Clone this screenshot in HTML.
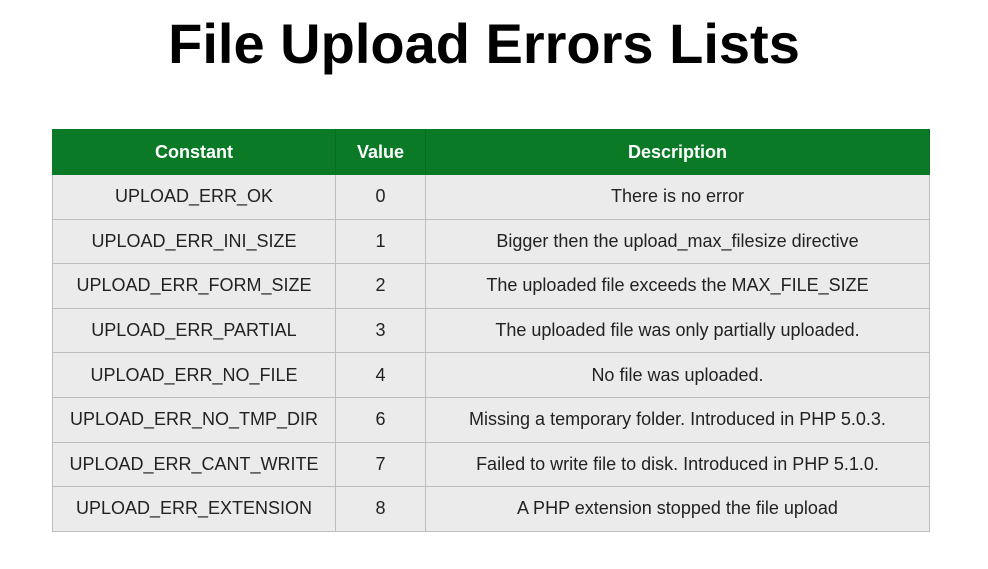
<!DOCTYPE html>
<html><head><style>
body{margin:0;width:988px;height:569px;background:#fff;font-family:"Liberation Sans",Arial,sans-serif;position:relative;overflow:hidden}
h1{position:absolute;top:12px;left:0;width:968px;margin:0;text-align:center;font-size:56px;font-weight:bold;color:#000;line-height:64px}
table{position:absolute;left:52px;top:129px;width:878px;border-collapse:collapse}
td,th{text-align:center;font-size:18px;color:#222;border:1px solid #bdbdbd;height:43.6px;padding:0}
th{background:#0b7a27;color:#fff;font-weight:bold;height:44px;border-color:#0b7a27;border-right:1px solid #0a6b22}
td{background:#ebebeb}
</style></head><body>
<h1>File Upload Errors Lists</h1>
<table>
<tr><th style="width:282px">Constant</th><th style="width:89px">Value</th><th>Description</th></tr>
<tr><td>UPLOAD_ERR_OK</td><td>0</td><td>There is no error</td></tr>
<tr><td>UPLOAD_ERR_INI_SIZE</td><td>1</td><td>Bigger then the upload_max_filesize directive</td></tr>
<tr><td>UPLOAD_ERR_FORM_SIZE</td><td>2</td><td>The uploaded file exceeds the MAX_FILE_SIZE</td></tr>
<tr><td>UPLOAD_ERR_PARTIAL</td><td>3</td><td>The uploaded file was only partially uploaded.</td></tr>
<tr><td>UPLOAD_ERR_NO_FILE</td><td>4</td><td>No file was uploaded.</td></tr>
<tr><td>UPLOAD_ERR_NO_TMP_DIR</td><td>6</td><td>Missing a temporary folder. Introduced in PHP 5.0.3.</td></tr>
<tr><td>UPLOAD_ERR_CANT_WRITE</td><td>7</td><td>Failed to write file to disk. Introduced in PHP 5.1.0.</td></tr>
<tr><td>UPLOAD_ERR_EXTENSION</td><td>8</td><td>A PHP extension stopped the file upload</td></tr>
</table>
</body></html>
